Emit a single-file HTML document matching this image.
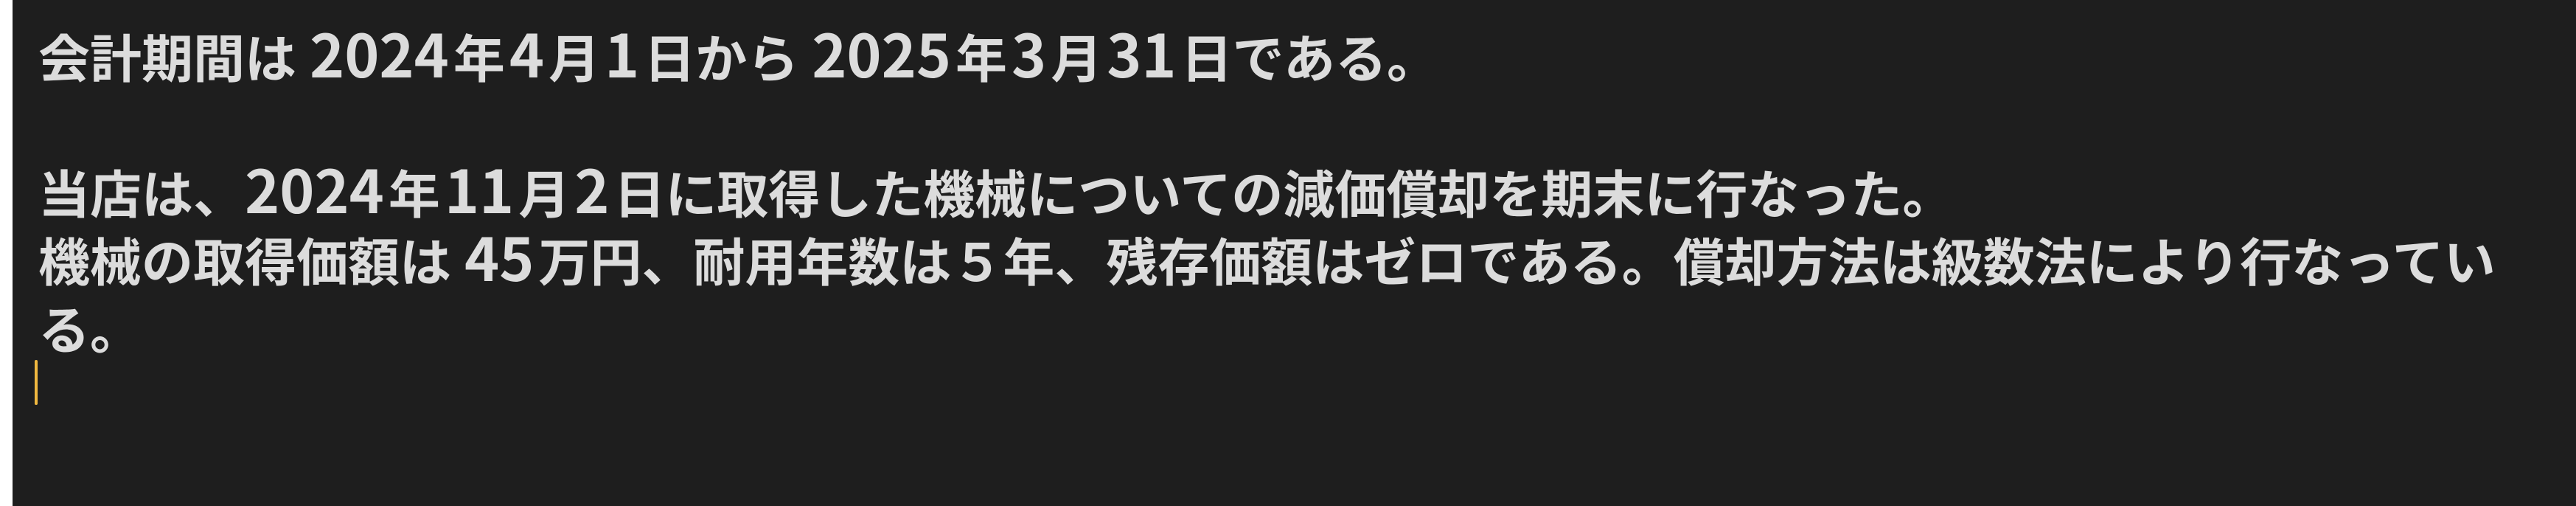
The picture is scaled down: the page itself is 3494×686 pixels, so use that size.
<!DOCTYPE html>
<html><head><meta charset="utf-8">
<style>
html,body{margin:0;padding:0;}
body{width:3494px;height:686px;overflow:hidden;background:#fff;position:relative;}
#ed{position:absolute;left:17px;top:0;width:3477px;height:686px;background:#1e1e1e;}
#t{position:absolute;left:35px;top:30px;font-family:"Noto Sans CJK JP",sans-serif;font-weight:700;font-size:70px;line-height:92px;color:#dcdcdc;white-space:nowrap;}
#t .l{display:block;height:92px;}
.d{font-size:80px;margin:0 6px;line-height:0;}
.s{margin-left:18px;}
.n{margin-left:0;}
#c{position:absolute;left:30px;top:488px;width:4px;height:61px;background:#f0b840;border-radius:2px;}
</style></head><body>
<div id="ed">
<div id="t"><span class="l">会計期間は<span class="d s">2024</span>年<span class="d">4</span>月<span class="d">1</span>日から<span class="d s">2025</span>年<span class="d">3</span>月<span class="d">31</span>日である。</span><span class="l"></span><span class="l">当店は、<span class="d n">2024</span>年<span class="d">11</span>月<span class="d">2</span>日に取得した機械についての減価償却を期末に行なった。</span><span class="l">機械の取得価額は<span class="d s">45</span>万円、耐用年数は５年、残存価額はゼロである。償却方法は級数法により行なってい</span><span class="l">る。</span></div>
<div id="c"></div>
</div>
</body></html>
